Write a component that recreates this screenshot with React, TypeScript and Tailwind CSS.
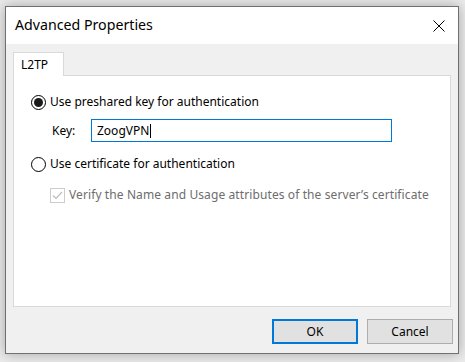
import React from "react";

export default function App() {
  const font = { fontFamily: '"Noto Sans", "Segoe UI", sans-serif' };
  return (
    <div
      className="w-[465px] h-[362px] bg-[#ebebeb] pl-[5px] pt-[6px] overflow-hidden"
      style={font}
    >
      <div className="w-[454px] h-[348px] border border-[#707070] bg-[#f0f0f0] flex flex-col shadow-[0_0_12px_rgba(0,0,0,0.3)]">
        {/* title bar */}
        <div className="h-[37px] bg-white flex items-center justify-between pl-[9px] pr-[13px]">
          <span className="text-[14.2px] text-black leading-none">Advanced Properties</span>
          <svg width="12" height="12" viewBox="0 0 12 12" className="block">
            <path d="M0.5 0.5 L11.5 11.5 M11.5 0.5 L0.5 11.5" stroke="#000" strokeWidth="1" />
          </svg>
        </div>
        {/* body */}
        <div className="flex-1 flex flex-col pt-[8px] pb-[9px]">
          <div className="mx-[7px] flex flex-col">
            <div className="flex">
              <div className="w-[51px] h-[24px] -mb-px bg-white border border-b-0 border-[#d9d9d9] relative z-10 flex items-center pl-[7px] text-[12px] text-black">
                L2TP
              </div>
            </div>
            <div className="h-[232px] bg-white border border-[#d9d9d9] flex flex-col text-[12px] text-black">
              {/* row 1 */}
              <div className="mt-[16px] h-[20px] flex items-center pl-[17px]">
                <div className="w-[15px] h-[15px] rounded-full border border-black flex items-center justify-center">
                  <div className="w-[9px] h-[9px] rounded-full bg-[#1a1a1a]" />
                </div>
                <span className="ml-[4px]">Use preshared key for authentication</span>
              </div>
              {/* row 2 */}
              <div className="mt-[7px] h-[23px] flex items-center pl-[38px]">
                <span className="w-[39px]">Key:</span>
                <div className="w-[301px] h-[23px] border border-[#0078d7] flex items-center pl-[5px]">
                  <span>ZoogVPN</span>
                  <span className="w-px h-[14px] bg-black ml-px" />
                </div>
              </div>
              {/* row 3 */}
              <div className="mt-[12px] h-[20px] flex items-center pl-[17px]">
                <div className="w-[15px] h-[15px] rounded-full border border-black" />
                <span className="ml-[4px]">Use certificate for authentication</span>
              </div>
              {/* row 4 */}
              <div className="mt-[11px] h-[20px] flex items-center pl-[36px]">
                <div className="w-[15px] h-[15px] border border-[#cccccc] flex items-center justify-center">
                  <svg width="11" height="9" viewBox="0 0 11 9">
                    <path d="M1 4.5 L4 7.5 L10 1" fill="none" stroke="#bcbcbc" strokeWidth="1.2" />
                  </svg>
                </div>
                <span className="ml-[4px] text-[#6d6d6d] tracking-[0.1px]">
                  Verify the Name and Usage attributes of the server’s certificate
                </span>
              </div>
            </div>
          </div>
          <div className="mt-auto flex justify-end gap-[9px] mr-[5px]">
            <button className="w-[86px] h-[25px] border-2 border-[#0078d7] bg-[#e1e1e1] text-[12px] text-black flex items-center justify-center">
              OK
            </button>
            <button className="w-[86px] h-[25px] border border-[#adadad] bg-[#e1e1e1] text-[12px] text-black flex items-center justify-center">
              Cancel
            </button>
          </div>
        </div>
      </div>
    </div>
  );
}
